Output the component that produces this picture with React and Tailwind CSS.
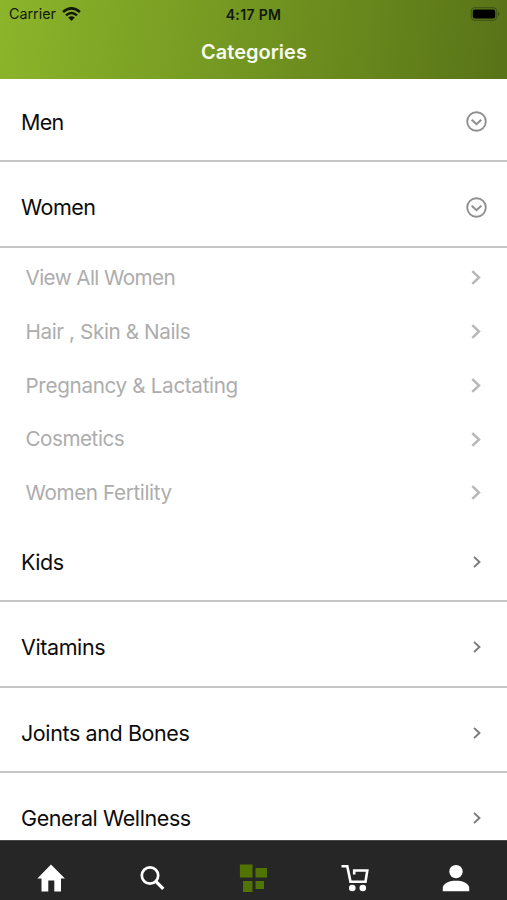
import { useState } from "react";

const CATEGORIES = [
  { name: "Men", tracking: "tracking-[-0.7px]", sub: [{ name: "View All Men", tracking: "tracking-[-0.6px]" }] },
  {
    name: "Women",
    tracking: "tracking-[-0.5px]",
    sub: [
      { name: "View All Women", tracking: "tracking-[-0.6px]" },
      { name: "Hair , Skin & Nails", tracking: "tracking-[-0.4px]" },
      { name: "Pregnancy & Lactating", tracking: "tracking-[-0.35px]" },
      { name: "Cosmetics", tracking: "tracking-[-0.5px]" },
      { name: "Women Fertility", tracking: "tracking-[-0.4px]" },
    ],
  },
  { name: "Kids", tracking: "tracking-[-0.5px]" },
  { name: "Vitamins", tracking: "tracking-[-0.4px]" },
  { name: "Joints and Bones", tracking: "tracking-[-0.4px]" },
  { name: "General Wellness", tracking: "tracking-[-0.4px]" },
];

export default function App() {
  const [open, setOpen] = useState("Women");

  return (
    <div className="flex h-[900px] w-[507px] flex-col overflow-hidden bg-white font-['Inter','Liberation_Sans',sans-serif] text-[#0c0c0c]">
      <Header />
      <main className="min-h-0 flex-1 overflow-hidden">
        {CATEGORIES.map((item, i) => (
          <Category
            key={item.name}
            item={item}
            first={i === 0}
            open={open === item.name}
            onToggle={() => setOpen(open === item.name ? "" : item.name)}
          />
        ))}
      </main>
      <TabBar />
    </div>
  );
}

function Header() {
  return (
    <header className="h-[79px] shrink-0 bg-linear-[98deg,#8cb52a_0%,#769a22_42%,#67861c_72%,#587318_100%]">
      <div className="grid h-[28px] grid-cols-3 items-center text-[#10180a]">
        <div className="flex items-center gap-[6px] pl-[9px] text-[14.3px]">
          <span>Carrier</span>
          <WifiIcon />
        </div>
        <div className="text-center text-[14px] font-semibold tracking-[0.35px]">4:17 PM</div>
        <div className="flex justify-end pr-[7px]">
          <BatteryIcon />
        </div>
      </div>
      <h1 className="pl-px text-center text-[20px] leading-[49px] font-semibold text-[#f8fbef]">Categories</h1>
    </header>
  );
}

function Category({ item, first, open, onToggle }) {
  return (
    <section>
      <button
        onClick={onToggle}
        className={`flex w-full items-center justify-between border-b-2 border-[#c6c6c6] pr-5 pl-[21px] text-left text-[21.5px] ${
          first ? "h-[83.4px] pt-[4px]" : "h-[85.5px] pt-[6.5px]"
        }`}
      >
        <span className={item.tracking}>{item.name}</span>
        {item.sub ? <CircleChevron /> : <Chevron className="mr-[6px] h-[12px] w-[8px] text-[#7c7c7c]" />}
      </button>
      {open && item.sub && (
        <ul>
          {item.sub.map((s) => (
            <li
              key={s.name}
              className="flex h-[53.75px] items-center justify-between pt-[6px] pr-[26px] pl-[25.5px] text-[20.7px] text-[#adadad]"
            >
              <span className={s.tracking}>{s.name}</span>
              <Chevron className="h-[15px] w-[10px] text-[#b8b8b8]" />
            </li>
          ))}
        </ul>
      )}
    </section>
  );
}

function TabBar() {
  return (
    <nav className="grid h-[60px] shrink-0 grid-cols-5 items-center justify-items-center border-t border-[#4a4a4a] bg-[#262626] pt-[15px] text-white">
      <svg width="28" height="28" viewBox="0 0 28 28" fill="currentColor">
        <path d="M14 0.5 27.9 14.5H24V27.5H17.3V16.5H11.3V27.5H4.5V14.5H0.4Z" />
      </svg>
      <svg width="26" height="26" viewBox="0 0 26 26" fill="none" stroke="currentColor" strokeWidth="2.7">
        <circle cx="11" cy="10.5" r="8.2" />
        <path d="M16.8 16.3 24.3 23.8" strokeWidth="3.3" />
      </svg>
      <svg width="28" height="28" viewBox="0 0 28 28" fill="#517400">
        <path d="M0.9 0.5H13.5V13.5H0.9ZM16.5 4H28V13.5H16.5ZM4 17H13.5V28H4ZM16.5 17H25V25H16.5Z" />
      </svg>
      <svg width="28" height="28" viewBox="0 0 28 28" fill="none" stroke="currentColor" strokeWidth="2.6">
        <path d="M0.5 2.2H6.3L9.5 17.8H24.5L26.3 6.5H13.2V10.5" />
        <circle cx="11.3" cy="24" r="3.3" fill="currentColor" stroke="none" />
        <circle cx="21.8" cy="24" r="3.3" fill="currentColor" stroke="none" />
      </svg>
      <svg width="28" height="28" viewBox="0 0 28 28" fill="currentColor">
        <circle cx="14" cy="7.6" r="6.7" />
        <path d="M0.8 27.2V23C2.5 18.6 8 16.8 14 16.8S25.5 18.6 27.2 23V27.2Z" />
      </svg>
    </nav>
  );
}

function Chevron({ className }) {
  return (
    <svg className={className} viewBox="0 0 10 15" fill="none" stroke="currentColor" strokeWidth="2.5">
      <path d="M1.3 1.1 8 7.5 1.3 13.9" />
    </svg>
  );
}

function CircleChevron() {
  return (
    <svg width="21" height="21" viewBox="0 0 21 21" fill="none" stroke="#8f8f8f" strokeWidth="1.9">
      <circle cx="10.5" cy="10.5" r="9.3" />
      <path d="M5.7 8.8 10.5 13.2 15.3 8.8" strokeWidth="2.1" />
    </svg>
  );
}

function WifiIcon() {
  return (
    <svg width="19" height="14" viewBox="0 0 19 14" fill="none" stroke="currentColor" strokeWidth="2.5">
      <path d="M1 5Q9.5-2.2 18 5M4 8.4Q9.5 3.6 15 8.4" />
      <path d="M6.2 10.6Q9.5 7.9 12.8 10.6L9.5 13.9Z" fill="currentColor" stroke="none" />
    </svg>
  );
}

function BatteryIcon() {
  return (
    <svg width="30" height="14" viewBox="0 0 30 14">
      <rect x="1.2" y="0.7" width="25.6" height="12.6" rx="3.5" fill="none" stroke="#10180a" strokeOpacity="0.4" />
      <rect x="2.8" y="2.5" width="22.4" height="9" rx="2" fill="#000" />
      <path d="M28 5v4q1.5-.6 1.5-2T28 5" fill="#10180a" fillOpacity="0.4" />
    </svg>
  );
}
